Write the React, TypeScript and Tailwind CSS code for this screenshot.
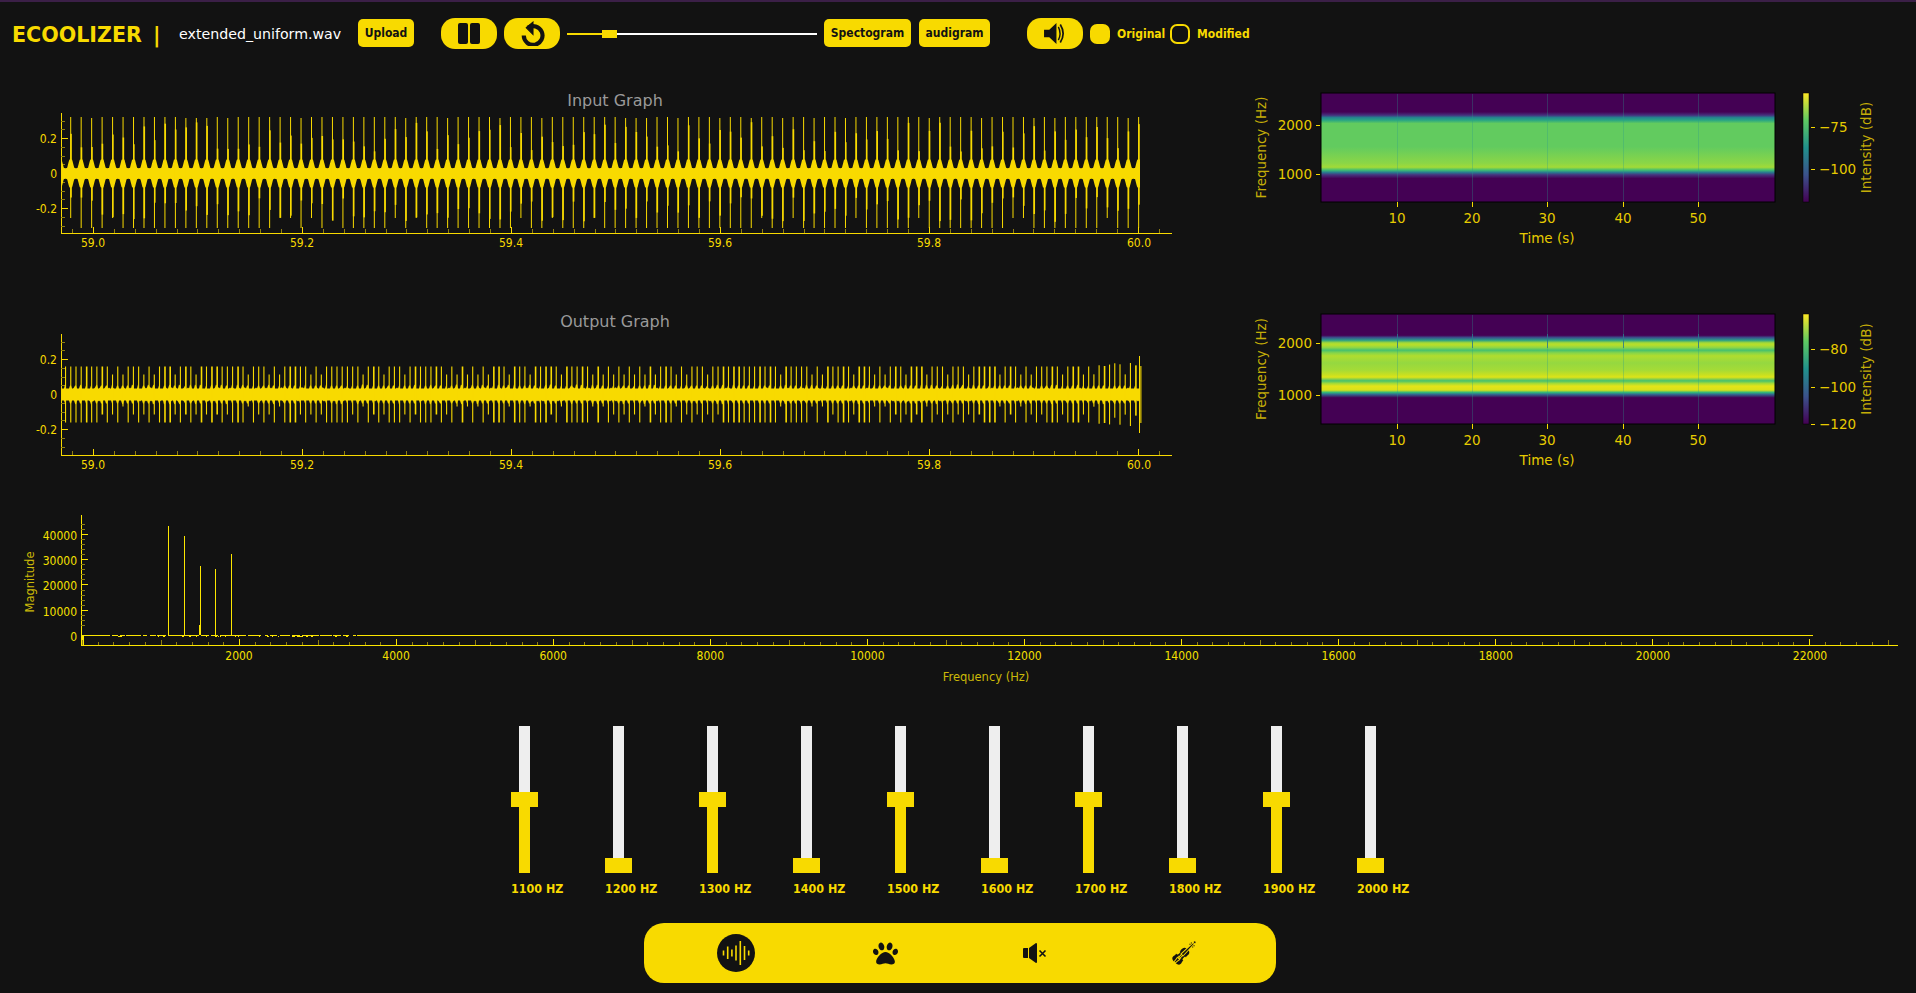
import { FaPaw } from "react-icons/fa";
import { GiViolin } from "react-icons/gi";

const YELLOW = "#f8da00";
const DIM = "#8f7f10";

// small seeded generator so the wave looks the same on every render
const rng = (seed: number) => () => {
  seed = (seed * 16807) % 2147483647;
  return seed / 2147483647;
};

const range = (n: number) => Array.from({ length: n }, (_, i) => i);

const WaveAxes = ({ top, axisY, zeroY, unit }: { top: number; axisY: number; zeroY: number; unit: number }) => {
  const yMinor: number[] = [];
  for (let i = -7; i <= 7; i++) {
    const y = zeroY + (i * unit) / 4;
    if (y > top && y < axisY) yMinor.push(y);
  }
  return (
    <g shapeRendering="crispEdges" fill={YELLOW}>
      <rect x={61} y={top} width={1} height={axisY - top} />
      <rect x={61} y={axisY} width={1111} height={1} />
      {yMinor.map((y) => (
        <rect key={y} x={61} y={y} width={y === zeroY ? 1 : 4} height={1} fill={DIM} />
      ))}
      {[zeroY - unit, zeroY + unit].map((y) => (
        <rect key={y} x={61} y={y} width={7} height={1} />
      ))}
      {range(53).map((i) => {
        const x = 72 + i * 20.9;
        const major = (i - 1) % 10 === 0;
        return (
          <rect
            key={i}
            x={x}
            y={axisY - (major ? 6 : 4)}
            width={1}
            height={major ? 6 : 4}
            fill={major ? YELLOW : DIM}
          />
        );
      })}
      <g className="fill-[#f8da00] font-['DejaVu_Sans_Condensed','DejaVu_Sans',sans-serif] text-[12px]" shapeRendering="auto">
        {[
          ["59.0", 93],
          ["59.2", 302],
          ["59.4", 511],
          ["59.6", 720],
          ["59.8", 929],
          ["60.0", 1139],
        ].map(([t, x]) => (
          <text key={t} x={x} y={axisY + 14} textAnchor="middle">
            {t}
          </text>
        ))}
        <text x={57} y={zeroY - unit + 5} textAnchor="end">0.2</text>
        <text x={57} y={zeroY + 5} textAnchor="end">0</text>
        <text x={57} y={zeroY + unit + 5} textAnchor="end">-0.2</text>
      </g>
    </g>
  );
};

const inputWave = () => {
  const r = rng(41);
  const zero = 173.5;
  let up = "";
  let down = "";
  for (let x = 61; x <= 1140; x += 0.5) {
    const d = Math.abs((x - 70.7 + 1047) % 10.47);
    const dist = Math.min(d, 10.47 - d);
    const h = 5.5 + 8.5 * Math.min(1, Math.max(0, (3.6 - dist) / 2.2)) + (dist > 3.6 ? 0.6 * (dist - 3.6) * -0.2 : 0);
    up += `${x},${zero - h} `;
    down = `${x},${zero + h} ` + down;
  }
  const spikes = range(103).map((k) => {
    const x = 70.2 + k * 10.47;
    const partial = r();
    return {
      x,
      top: 117 + (partial > 0.85 ? 1 : 0),
      bottom: 228 - (partial < 0.12 ? 10 : 0),
      thickTop: 122 + r() * 30,
      thickBottom: 222 - r() * 25,
    };
  });
  return (
    <g fill={YELLOW}>
      <polygon points={up + down} />
      {spikes.map((s) => (
        <g key={s.x}>
          <rect x={s.x} y={s.top} width={1} height={s.bottom - s.top} />
          <rect x={s.x} y={s.thickTop} width={1.6} height={s.thickBottom - s.thickTop} />
        </g>
      ))}
    </g>
  );
};

const outputWave = () => {
  const r = rng(97);
  const zero = 394.5;
  let up = "";
  let down = "";
  for (let x = 61; x <= 1140; x += 1) {
    const crest = Math.abs(Math.sin((x - 65) * (Math.PI / 5.22))) < 0.5 ? 3 : 0;
    const hUp = 6 + crest + (r() > 0.85 ? 1 : 0);
    const hDown = 6 + crest + (r() > 0.85 ? 1 : 0);
    up += `${x},${zero - hUp} `;
    down = `${x},${zero + hDown} ` + down;
  }
  const spikes = range(207).map((k) => {
    const x = 65 + k * 5.22;
    const p = r();
    const boost = x > 1090 ? ((x - 1090) / 50) * 8 * r() : 0;
    const amp = (k % 2 === 0 ? 28 : p > 0.4 ? 28 : 20) + boost;
    const w = p > 0.8 ? 1.6 : 1.1;
    return { x, amp, w, low: k % 2 === 0 ? amp : amp - (r() > 0.5 ? 8 : 0) };
  });
  return (
    <g fill={YELLOW}>
      <polygon points={up + down} />
      {spikes.map((s) => (
        <rect key={s.x} x={s.x} y={zero - s.amp} width={s.w} height={s.amp + s.low} />
      ))}
      <rect x={1139} y={356} width={1} height={77} />
    </g>
  );
};

type Stop = [number, string];

const Spectro = ({
  id,
  top,
  bottom,
  base,
  stops,
  ticks,
  cbar,
  peaks,
}: {
  id: string;
  top: number;
  bottom: number;
  base: [number, number];
  stops: Stop[];
  ticks: [string, number][];
  cbar: [string, number][];
  peaks?: boolean;
}) => {
  const xs = [1397, 1472, 1547, 1623, 1698];
  const mid = (top + bottom) / 2;
  const span = bottom - top;
  return (
    <g>
      <defs>
        <linearGradient id={id} x1="0" y1="0" x2="0" y2="1">
          {stops.map(([o, c]) => (
            <stop key={o} offset={(o - base[0]) / (base[1] - base[0])} stopColor={c} />
          ))}
        </linearGradient>
        <linearGradient id={id + "bar"} x1="0" y1="1" x2="0" y2="0">
          {["#440154", "#3b528b", "#21918c", "#5ec962", "#fde725"].map((c, i) => (
            <stop key={c} offset={i / 4} stopColor={c} />
          ))}
        </linearGradient>
      </defs>
      <rect x={1321} y={top} width={454} height={span} fill={`url(#${id})`} stroke="#000" />
      {xs.map((x) => (
        <g key={x} shapeRendering="crispEdges">
          <rect x={x} y={top + 1} width={1} height={span - 1} fill="#2a9a8a" opacity={0.3} />
          {peaks && <rect x={x} y={top + 20} width={1} height={14} fill="#2a788e" opacity={0.8} />}
          <rect x={x} y={bottom} width={1} height={5} fill={YELLOW} />
        </g>
      ))}
      <rect x={1803} y={top} width={6} height={span} fill={`url(#${id}bar)`} stroke="#000" strokeWidth={0.5} />
      <g className="fill-[#e6cb00] text-[13.5px]">
        {xs.map((x, i) => (
          <text key={x} x={x} y={bottom + 21} textAnchor="middle">
            {(i + 1) * 10}
          </text>
        ))}
        <text x={1547} y={bottom + 41} textAnchor="middle">Time (s)</text>
        {ticks.map(([t, y]) => (
          <g key={t}>
            <rect x={1316} y={y} width={4} height={1} fill={YELLOW} />
            <text x={1312} y={y + 5} textAnchor="end">{t}</text>
          </g>
        ))}
        {cbar.map(([t, y]) => (
          <g key={t}>
            <rect x={1811} y={y} width={4} height={1} fill={YELLOW} />
            <text x={1819} y={y + 5}>{t}</text>
          </g>
        ))}
      </g>
      <g className="fill-[#c4ad08] text-[13.5px]">
        <text transform={`translate(1266 ${mid}) rotate(-90)`} textAnchor="middle">Frequency (Hz)</text>
        <text transform={`translate(1871 ${mid}) rotate(-90)`} textAnchor="middle">Intensity (dB)</text>
      </g>
    </g>
  );
};

const input_stops: Stop[] = [
  [38, "#440154"],
  [95, "#440154"],
  [105, "#46317e"],
  [112, "#26828e"],
  [120, "#29a583"],
  [130, "#62cb5f"],
  [200, "#62cb5f"],
  [250, "#8bd646"],
  [262, "#a2da37"],
  [271, "#3dbc74"],
  [278, "#2a788e"],
  [285, "#46337f"],
  [296, "#440154"],
  [367, "#440154"],
];

const output_stops: Stop[] = [
  [41, "#440154"],
  [105, "#440154"],
  [112, "#3b528b"],
  [120, "#2a9f86"],
  [128, "#a5db36"],
  [134, "#b8de29"],
  [142, "#8ed645"],
  [150, "#46c06f"],
  [158, "#86d549"],
  [167, "#b0dd2f"],
  [188, "#95d840"],
  [210, "#a5db36"],
  [224, "#c8e020"],
  [231, "#dde318"],
  [242, "#46c06f"],
  [250, "#a5db36"],
  [258, "#e5e419"],
  [270, "#d8e219"],
  [277, "#35b779"],
  [283, "#31688e"],
  [293, "#440154"],
  [372, "#440154"],
];

const fftNoise = () => {
  const r = rng(13);
  return range(60).map((i) => {
    const x = 110 + r() * 250;
    return { i, x, gap: r() > 0.5, w: 1 + Math.floor(r() * 2) };
  });
};

const FftChart = () => {
  const fft = "#fce600";
  return (
    <svg viewBox="0 512 1916 178" className="block h-[178px] w-[1916px] text-[11.5px]">
      <g shapeRendering="crispEdges" fill={fft}>
        <rect x={81} y={515} width={1} height={130} />
        <rect x={81} y={645} width={1817} height={1} />
        <rect x={82} y={635} width={1.5} height={10} />
        <rect x={82} y={635} width={1731} height={1} />
        {[
          [168, 526],
          [184, 536],
          [200, 566],
          [215, 569],
          [231, 554],
        ].map(([x, y]) => (
          <rect key={x} x={x} y={y} width={1} height={636 - y} />
        ))}
        <rect x={199} y={625} width={1} height={10} />
        {fftNoise().map((n) =>
          n.gap ? (
            <rect key={n.i} x={n.x} y={635} width={n.w} height={1} fill="#121212" />
          ) : (
            <rect key={n.i} x={n.x} y={636} width={n.w} height={1} />
          ),
        )}
        {range(21).map((i) => (
          <rect
            key={i}
            x={81}
            y={524 + i * 5.04}
            width={i % 5 === 2 ? 7 : 4}
            height={1}
            fill={i % 5 === 2 ? fft : DIM}
          />
        ))}
        {range(116).map((i) => {
          const x = 82 + i * 15.7;
          const major = i % 10 === 0 && i > 0;
          const medium = i % 5 === 0;
          return (
            <rect
              key={i}
              x={x}
              y={645 - (major ? 6 : medium ? 5 : 3)}
              width={1}
              height={major ? 6 : medium ? 5 : 3}
              fill={major ? fft : DIM}
            />
          );
        })}
      </g>
      <g className="fill-[#f5e000] font-['DejaVu_Sans_Condensed','DejaVu_Sans',sans-serif] text-[12px]">
        {[40000, 30000, 20000, 10000, 0].map((v, i) => (
          <text key={v} x={77} y={540 + i * 25.2} textAnchor="end">{v}</text>
        ))}
        {range(11).map((i) => (
          <text key={i} x={239 + i * 157.1} y={660} textAnchor="middle">
            {(i + 1) * 2000}
          </text>
        ))}
      </g>
      <g className="fill-[#cbb908]">
        <text x={986} y={681} textAnchor="middle">Frequency (Hz)</text>
        <text transform="translate(34 582) rotate(-90)" textAnchor="middle">Magnitude</text>
      </g>
    </svg>
  );
};

const ChartRow = ({
  viewY,
  title,
  titleY,
  top,
  axisY,
  zeroY,
  wave,
  children,
}: {
  viewY: number;
  title: string;
  titleY: number;
  top: number;
  axisY: number;
  zeroY: number;
  wave: React.ReactNode;
  children: React.ReactNode;
}) => (
  <div className="flex h-[221px]">
    <svg viewBox={`0 ${viewY} 1200 221`} className="block h-[221px] w-[1200px]">
      <text x={615} y={titleY} textAnchor="middle" className="fill-[#9a9a9a] text-[16px]">
        {title}
      </text>
      <WaveAxes top={top} axisY={axisY} zeroY={zeroY} unit={35} />
      {wave}
    </svg>
    <svg viewBox={`1200 ${viewY} 716 221`} className="block h-[221px] w-[716px]">
      {children}
    </svg>
  </div>
);

const BTN =
  "flex h-[28px] items-center justify-center rounded-[5px] bg-[#f8da00] font-['DejaVu_Sans_Condensed','DejaVu_Sans',sans-serif] text-[12px] font-bold text-[#121212]";
const PILL = "flex h-[31px] w-[56px] items-center justify-center rounded-[14px] bg-[#f8da00] text-[#121212]";

const Header = () => (
  <div className="flex h-[68px] items-start pt-[16px]">
    <div className="ml-[12px] flex h-[34px] w-[167px] items-center text-[20.6px] font-bold text-[#f8da00]">
      <span className="w-[141px]">ECOOLIZER</span>
      <span>|</span>
    </div>
    <div className="flex h-[34px] w-[179px] items-center text-[14.2px] text-white">extended_uniform.wav</div>
    <button className={`${BTN} mt-[1px] w-[56px]`}>Upload</button>
    <button className={`${PILL} ml-[27px] gap-[2px]`}>
      <span className="h-[21px] w-[10px] rounded-[2px] bg-[#121212]" />
      <span className="h-[21px] w-[10px] rounded-[2px] bg-[#121212]" />
    </button>
    <button className={`${PILL} ml-[7px]`}>
      <svg viewBox="0 0 24 24" className="h-[25px] w-[25px]" fill="none" stroke="currentColor">
        <path d="M7.5 6.5 A9 9 0 1 1 3.6 14" strokeWidth="4" />
        <path d="M6 6.5 L12.5 1 V13 Z" fill="currentColor" strokeWidth="1" />
      </svg>
    </button>
    <div className="ml-[7px] flex h-[31px] w-[250px] items-center">
      <div className="h-[2px] w-[35px] bg-[#f8da00]" />
      <div className="h-[8px] w-[15px] bg-[#f8da00]" />
      <div className="h-[2px] flex-1 bg-white" />
    </div>
    <button className={`${BTN} ml-[7px] mt-[1px] w-[87px]`}>Spectogram</button>
    <button className={`${BTN} ml-[8px] mt-[1px] w-[71px]`}>audigram</button>
    <button className={`${PILL} ml-[37px]`}>
      <svg viewBox="0 0 24 22" className="h-[21px] w-[23px]" fill="currentColor">
        <path d="M0 7 H5.5 L13 0 V22 L5.5 15 H0 Z" />
        <path d="M15 4 Q18.5 11 15 18" fill="none" stroke="currentColor" strokeWidth="1.5" />
        <path d="M17 1.5 Q23 11 17 20.5" fill="none" stroke="currentColor" strokeWidth="1.8" />
      </svg>
    </button>
    <div className="ml-[7px] flex h-[31px] items-center font-['DejaVu_Sans_Condensed','DejaVu_Sans',sans-serif] text-[12px] font-bold text-[#f8da00]">
      <span className="h-[20px] w-[20px] rounded-[7px] border-2 border-[#f8da00] bg-[#f8da00]" />
      <span className="ml-[7px] w-[53px]">Original</span>
      <span className="h-[20px] w-[20px] rounded-[7px] border-2 border-[#f8da00]" />
      <span className="ml-[7px]">Modified</span>
    </div>
  </div>
);

const bands = [1100, 1200, 1300, 1400, 1500, 1600, 1700, 1800, 1900, 2000];

const Sliders = () => (
  <div className="mt-[36px] flex gap-[40px] pl-[511px]">
    {bands.map((hz, i) => {
      const mid = i % 2 === 0;
      return (
        <div key={hz} className="w-[54px]">
          <div className="flex h-[147px] w-[27px] flex-col items-center">
            <div className={`w-[11px] bg-[#eeeeee] ${mid ? "h-[66px]" : "h-[132px]"}`} />
            <div className="h-[15px] w-[27px] bg-[#f8da00]" />
            {mid && <div className="h-[66px] w-[11px] bg-[#f8da00]" />}
          </div>
          <div className="mt-[8px] whitespace-nowrap font-['DejaVu_Sans_Condensed','DejaVu_Sans',sans-serif] text-[12.4px] font-bold leading-[15px] text-[#f8da00]">
            {hz} HZ
          </div>
        </div>
      );
    })}
  </div>
);

const Dock = () => (
  <div className="ml-[644px] mt-[27px] grid h-[60px] w-[632px] grid-cols-4 items-center justify-items-center rounded-[20px] bg-[#f8da00] px-[17px] text-[#121212]">
    <div className="flex h-[38px] w-[38px] items-center justify-center rounded-full bg-[#121212]">
      <svg viewBox="0 0 38 38" className="h-[38px] w-[38px]" stroke="#f8da00" strokeWidth="1.6">
        {[
          [6.5, 16.5, 21.5],
          [10.7, 12.5, 25],
          [14.9, 15.5, 22.5],
          [19, 11.5, 26.5],
          [23.3, 7, 31],
          [27.5, 12, 26],
          [31.7, 16.5, 21.5],
        ].map(([x, a, b]) => (
          <line key={x} x1={x} x2={x} y1={a} y2={b} />
        ))}
      </svg>
    </div>
    <FaPaw className="h-[25px] w-[25px]" />
    <svg viewBox="0 0 24 20" className="h-[20px] w-[24px]" fill="currentColor">
      <path d="M0 6 Q0 5 1 5 H5 V15 H1 Q0 15 0 14 Z" />
      <path d="M6 5 L13 0 Q14 0 14 1 V19 Q14 20 13 20 L6 15 Z" />
      <path d="M16.5 7.5 L22.5 13.5 M22.5 7.5 L16.5 13.5" stroke="currentColor" strokeWidth="1.6" />
    </svg>
    <GiViolin className="h-[26px] w-[26px]" />
  </div>
);

export default function App() {
  return (
    <div className="h-[993px] w-[1916px] overflow-hidden bg-[#121212] font-['DejaVu_Sans',sans-serif]">
      <div className="h-[2px] bg-[#3b1f47]" />
      <Header />
      <ChartRow
        viewY={70}
        title="Input Graph"
        titleY={106}
        top={113}
        axisY={233}
        zeroY={173}
        wave={inputWave()}
      >
        <Spectro
          id="specA"
          top={93}
          bottom={202}
          base={[38, 367]}
          stops={input_stops}
          ticks={[["2000", 125], ["1000", 174]]}
          cbar={[["−75", 127], ["−100", 169]]}
        />
      </ChartRow>
      <ChartRow
        viewY={291}
        title="Output Graph"
        titleY={327}
        top={334}
        axisY={455}
        zeroY={394}
        wave={outputWave()}
      >
        <Spectro
          id="specB"
          top={314}
          bottom={424}
          base={[41, 372]}
          stops={output_stops}
          ticks={[["2000", 343], ["1000", 395]]}
          cbar={[["−80", 349], ["−100", 387], ["−120", 424]]}
          peaks
        />
      </ChartRow>
      <FftChart />
      <Sliders />
      <Dock />
    </div>
  );
}
